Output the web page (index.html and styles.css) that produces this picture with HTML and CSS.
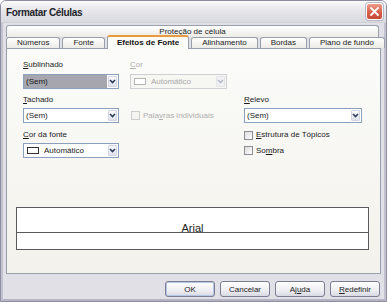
FILE: index.html
```html
<!DOCTYPE html>
<html lang="pt">
<head>
<meta charset="utf-8">
<title>Formatar Células</title>
<link rel="stylesheet" href="styles.css">
</head>
<body>
<div class="window">
  <div class="titlebar">
    <span class="title">Formatar Células</span>
    <span class="close"><svg width="11" height="11" viewBox="0 0 11 11"><path d="M2 2 L9 9 M9 2 L2 9" stroke="#fff" stroke-width="1.8" stroke-linecap="round"/></svg></span>
  </div>
  <div class="body">
    <div class="tabrow upper"><div class="tab wide">Proteção de célula</div></div>
    <div class="tabrow lower">
      <div class="tab">Números</div>
      <div class="tab">Fonte</div>
      <div class="tab active">Efeitos de Fonte</div>
      <div class="tab">Alinhamento</div>
      <div class="tab">Bordas</div>
      <div class="tab">Plano de fundo</div>
    </div>
    <div class="panel">
      <div class="form">
        <div class="lbl r1 c1"><u>S</u>ublinhado</div>
        <div class="combo sel r3 c1"><span class="val">(Sem)</span><span class="arrow"><svg width="7" height="5" viewBox="0 0 7 5"><path d="M1 1 L3.5 3.5 L6 1" fill="none" stroke="#2c3a5c" stroke-width="1.6"/></svg></span></div>

        <div class="lbl dis r1 c3"><u>C</u>or</div>
        <div class="combo disabled r3 c3"><span class="swatch"></span><span class="val">Automático</span><span class="arrow"><svg width="7" height="5" viewBox="0 0 7 5"><path d="M1 1 L3.5 3.5 L6 1" fill="none" stroke="#b8bccb" stroke-width="1.6"/></svg></span></div>

        <div class="lbl r5 c1"><u>T</u>achado</div>
        <div class="combo r7 c1"><span class="val">(Sem)</span><span class="arrow"><svg width="7" height="5" viewBox="0 0 7 5"><path d="M1 1 L3.5 3.5 L6 1" fill="none" stroke="#2c3a5c" stroke-width="1.6"/></svg></span></div>

        <div class="check dis r7 c3"><span class="cb"></span><span>Pala<u>v</u>ras individuais</span></div>

        <div class="lbl r5 c5"><u>R</u>elevo</div>
        <div class="combo r7 c5"><span class="val">(Sem)</span><span class="arrow"><svg width="7" height="5" viewBox="0 0 7 5"><path d="M1 1 L3.5 3.5 L6 1" fill="none" stroke="#2c3a5c" stroke-width="1.6"/></svg></span></div>

        <div class="lbl r9 c1"><u>C</u>or da fonte</div>
        <div class="combo r11 c1"><span class="swatch"></span><span class="val">Automático</span><span class="arrow"><svg width="7" height="5" viewBox="0 0 7 5"><path d="M1 1 L3.5 3.5 L6 1" fill="none" stroke="#2c3a5c" stroke-width="1.6"/></svg></span></div>

        <div class="check r9 c5"><span class="cb"></span><span><u>E</u>strutura de Tópicos</span></div>
        <div class="check r11 c5"><span class="cb"></span><span>So<u>m</u>bra</span></div>
      </div>
      <div class="preview">
        <div class="preview-top"><span class="sample">Arial</span></div>
      </div>
    </div>
    <div class="buttons">
      <div class="btn default">OK</div>
      <div class="btn">Cancelar</div>
      <div class="btn">Aj<u>u</u>da</div>
      <div class="btn"><u>R</u>edefinir</div>
    </div>
  </div>
</div>
</body>
</html>
```

FILE: styles.css
```css
html, body {
  margin: 0;
  padding: 0;
  background: #ffffff;
}

.window {
  width: 387px;
  height: 302px;
  box-sizing: border-box;
  border: 1px solid #8d8ea2;
  border-radius: 6px 6px 0 0;
  background: #e1e0e7;
  font-family: "Liberation Sans", Arial, sans-serif;
  font-size: 8px;
  color: #1a1a1a;
  display: flex;
  flex-direction: column;
  overflow: hidden;
}

.titlebar {
  height: 21px;
  flex: none;
  display: flex;
  align-items: center;
  justify-content: space-between;
  padding: 0 3px 0 5px;
  background: linear-gradient(#fbfbfc, #e6e6eb 45%, #d9d9e0);
  border-bottom: 1px solid #d0d0d9;
}

.title {
  font-size: 10px;
  font-weight: bold;
  letter-spacing: -0.35px;
  color: #1e1e2a;
  margin-top: 1px;
}

.close {
  width: 17px;
  height: 17px;
  box-sizing: border-box;
  border: 1px solid #fff;
  border-radius: 3px;
  background: linear-gradient(#ee9a88, #d9604a 55%, #c54a36);
  display: flex;
  align-items: center;
  justify-content: center;
  box-shadow: 0 0 0 1px #b7b7c4;
}

.body {
  flex: 1;
  display: flex;
  flex-direction: column;
  padding: 2px 3px 0 3px;
  border-left: 2px solid #c3c3cf;
  border-right: 2px solid #c3c3cf;
  border-bottom: 2px solid #b4b4c2;
}

.tabrow {
  display: flex;
  position: relative;
  z-index: 1;
}

.upper {
  height: 12px;
  margin-right: 2px;
}

.lower {
  height: 11px;
  gap: 2px;
  align-items: flex-end;
}

.tab {
  box-sizing: border-box;
  height: 11px;
  padding: 0 10px;
  border: 1px solid #97a0ab;
  border-bottom: none;
  border-radius: 3px 3px 0 0;
  background: linear-gradient(#ffffff, #ecebe6);
  line-height: 10px;
  white-space: nowrap;
  color: #222;
}

.tab.wide {
  flex: 1;
  height: 12px;
  text-align: center;
  line-height: 11px;
}

.tab.active {
  height: 14px;
  margin-bottom: -1px;
  padding: 0 9px;
  border-top: 2px solid #e89a3c;
  background: #fbfbf8;
  font-weight: bold;
  line-height: 11px;
  color: #111;
}

.panel {
  height: 226px;
  box-sizing: border-box;
  border: 1px solid #97a0ab;
  background: linear-gradient(#fbfbf9, #f3f2ec);
  display: flex;
  flex-direction: column;
}

.form {
  display: grid;
  grid-template-columns: 96px 11px 97px 17px 118px;
  grid-template-rows: 10px 4px 15px 6px 10px 3px 15px 7px 10px 3px 15px;
  padding: 11px 0 0 16px;
}

.r1 { grid-row: 1; }
.r3 { grid-row: 3; }
.r5 { grid-row: 5; }
.r7 { grid-row: 7; }
.r9 { grid-row: 9; }
.r11 { grid-row: 11; }
.c1 { grid-column: 1; }
.c3 { grid-column: 3; }
.c5 { grid-column: 5; }

.lbl {
  line-height: 10px;
  white-space: nowrap;
}

.dis {
  color: #aeaeae;
}

.combo {
  box-sizing: border-box;
  height: 15px;
  border: 1px solid #8aa0bd;
  background: #ffffff;
  display: flex;
  align-items: center;
}

.combo.sel .val {
  background: #a6a6ae;
  align-self: stretch;
  display: flex;
  align-items: center;
}

.combo.disabled {
  border-color: #cfcfd6;
  background: #f6f6f2;
  color: #a9a9a9;
}

.val {
  flex: 1;
  padding-left: 2px;
  white-space: nowrap;
}

.swatch {
  width: 12px;
  height: 7px;
  box-sizing: border-box;
  border: 1px solid #333;
  background: #fff;
  margin: 0 3px 0 3px;
  flex: none;
}

.combo.disabled .swatch {
  border-color: #b5b5b5;
}

.arrow {
  width: 9px;
  height: 11px;
  margin: 0 1px 0 1px;
  box-sizing: border-box;
  border: 1px solid #d3d6e2;
  border-radius: 1px;
  background: linear-gradient(#fafbfd, #dfe2ec);
  display: flex;
  align-items: center;
  justify-content: center;
  flex: none;
}

.combo.disabled .arrow {
  border-color: #e3e3e8;
  background: #f1f1f4;
}

.check {
  display: flex;
  align-items: center;
  gap: 3px;
  white-space: nowrap;
  line-height: 10px;
}

.cb {
  width: 9px;
  height: 9px;
  box-sizing: border-box;
  border: 1px solid #8c8c94;
  background: linear-gradient(135deg, #dcdcdc, #ffffff);
  flex: none;
}

.check.dis .cb {
  margin-left: 1px;
  border-color: #cdcdcd;
  background: #f4f4f1;
}

.preview {
  margin: 49px 0 0 9px;
  width: 353px;
  height: 43px;
  box-sizing: border-box;
  border: 1px solid #5a5a5a;
  background: #ffffff;
}

.preview-top {
  height: 24px;
  border-bottom: 1px solid #5a5a5a;
  display: flex;
  align-items: flex-end;
  justify-content: center;
}

.sample {
  font-size: 11px;
  line-height: 11px;
  margin-bottom: -2px;
  color: #222;
}

.buttons {
  display: flex;
  justify-content: flex-end;
  gap: 5px;
  margin-top: 7px;
  padding-right: 1px;
}

.btn {
  width: 50px;
  height: 16px;
  box-sizing: border-box;
  border: 1px solid #7b7d92;
  border-radius: 3px;
  background: linear-gradient(#ffffff, #eeeef3 60%, #d9d9e2);
  display: flex;
  align-items: center;
  justify-content: center;
  color: #222;
}

.btn.default {
  box-shadow: inset 0 0 0 1px #b6c6e8;
}
```
